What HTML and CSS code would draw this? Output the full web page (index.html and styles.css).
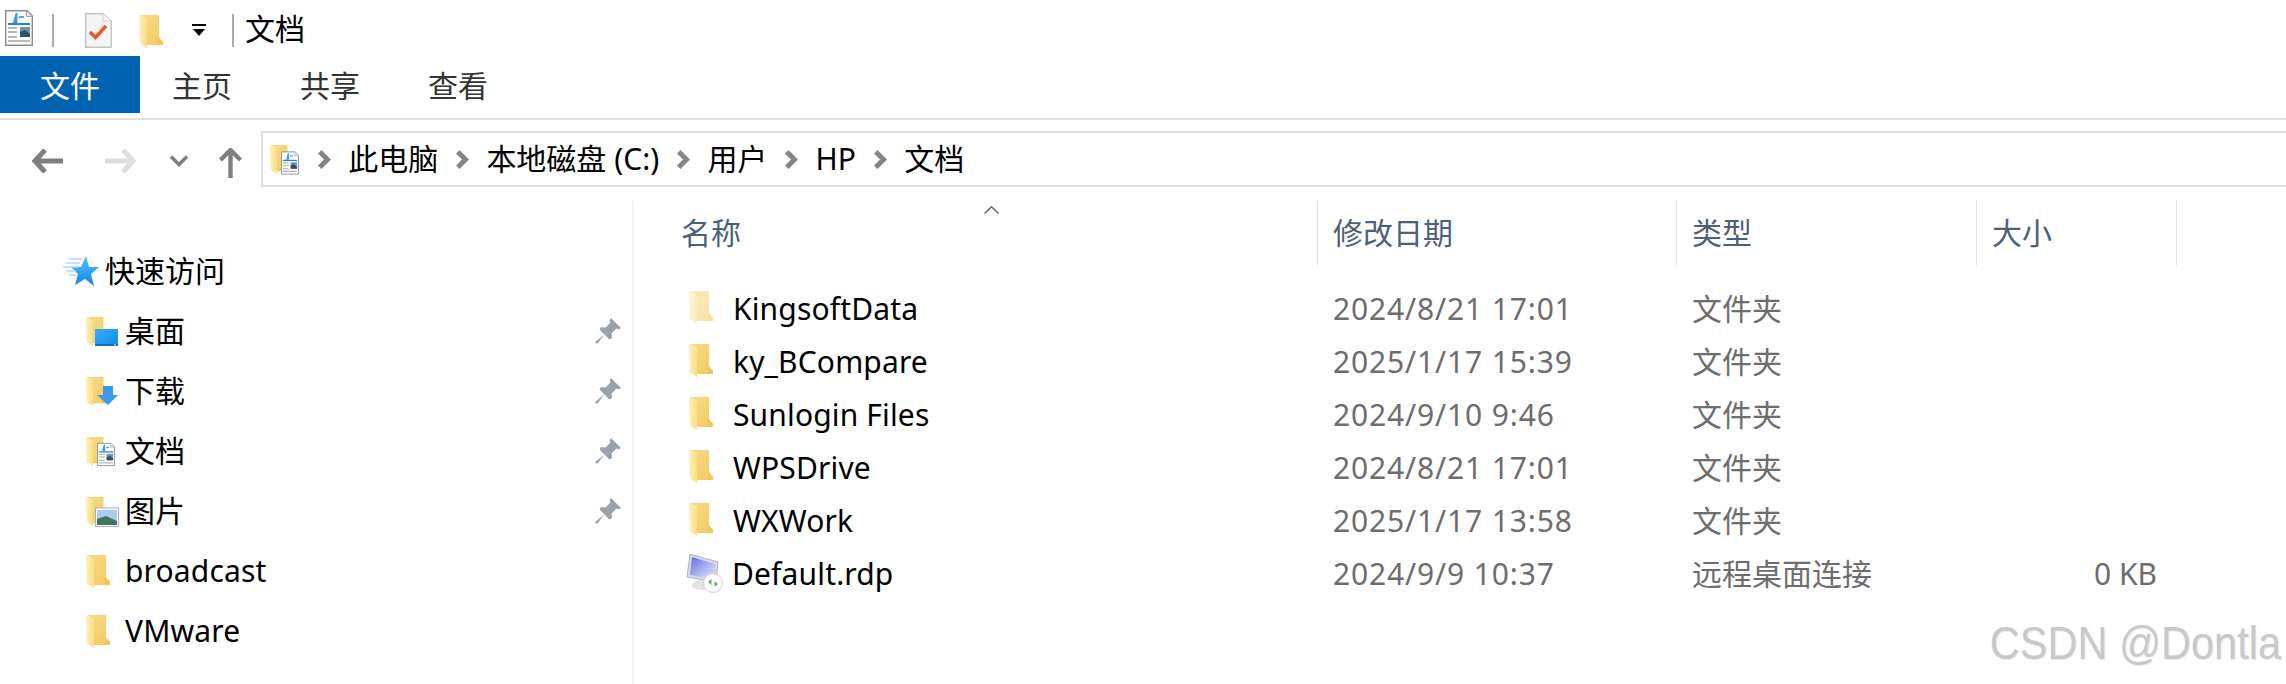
FILE: index.html
```html
<!DOCTYPE html>
<html lang="zh-CN">
<head>
<meta charset="utf-8">
<title>文档</title>
<link rel="stylesheet" href="styles.css">
</head>
<body>
<svg class="defs" xmlns="http://www.w3.org/2000/svg">
  <defs>
    <linearGradient id="gBody" x1="0" y1="0" x2="1" y2="1"><stop offset="0" stop-color="#f8dc8a"/><stop offset="1" stop-color="#f2c95c"/></linearGradient>
    <linearGradient id="gFlap" x1="0" y1="0" x2="1" y2="0"><stop offset="0" stop-color="#fff0b8"/><stop offset="1" stop-color="#fbdd85"/></linearGradient>
    <linearGradient id="gStar" x1="0" y1="0" x2="0" y2="1"><stop offset="0" stop-color="#4cc2ff"/><stop offset="1" stop-color="#1583e8"/></linearGradient>
    <linearGradient id="gScreen" x1="0" y1="0" x2="1" y2="1"><stop offset="0" stop-color="#37adfb"/><stop offset="1" stop-color="#0f8ae6"/></linearGradient>
    <linearGradient id="gMon" x1="0" y1="0" x2="1" y2="1"><stop offset="0" stop-color="#5c6fd6"/><stop offset=".55" stop-color="#a9b6f0"/><stop offset="1" stop-color="#dfe5fb"/></linearGradient>
    <symbol id="folder" viewBox="0 0 24 33">
      <path d="M1 0H20V26L24 26V30H8V33L1 28Z" fill="url(#gBody)"/>
      <path d="M20 22L24 27V30H18Z" fill="#f1c75a"/>
      <path d="M0 0L8 6V33L1 28Z" fill="url(#gFlap)"/>
      <path d="M0 0L1 0L8 5V6Z" fill="#fff6d6"/>
    </symbol>
    <symbol id="doc" viewBox="0 0 28 36">
      <path d="M.7.7H22L27.3 6V35.3H.7Z" fill="#fff" stroke="#8d8d8d" stroke-width="1.4"/>
      <path d="M21.5 1V6.5H27" fill="#e8e8e8" stroke="#a5a5a5"/>
      <path d="M4 13L8 13L10.500 3H12.500V13H9Z" fill="#3b9be8"/>
      <rect x="14" y="6" width="5" height="2" fill="#4ba6ee"/>
      <rect x="3" y="13" width="22" height="2" fill="#1c86dc"/>
      <rect x="3" y="17" width="9" height="2" fill="#b9b9b9"/>
      <rect x="3" y="21" width="9" height="2" fill="#b9b9b9"/>
      <rect x="3" y="26" width="9" height="2" fill="#b9b9b9"/>
      <rect x="3" y="30" width="22" height="2" fill="#b9b9b9"/>
      <rect x="15" y="17" width="10" height="10" fill="#6e93ad"/>
      <path d="M15 27V22L20 20L25 24V27Z" fill="#33505f"/>
    </symbol>
    <symbol id="chev" viewBox="0 0 13 19">
      <path d="M0 3.500L3.500 0L13 9.500L3.500 19L0 15.500L6 9.500Z" fill="#858585"/>
    </symbol>
    <symbol id="pin" viewBox="0 0 26 26">
      <path d="M16 0L26 10L23.500 11.500L21.500 10.500L16.500 15.500L17 20L14.500 21.500L9.500 16.500L2 26L0 24L9.500 16.500L4.500 11.500L6 9L10.500 9.500L15.500 4.500L14.500 2.500Z" fill="#99a2aa"/>
    </symbol>
  </defs>
</svg>

<header class="titlebar">
  <svg class="ic-doc" viewBox="0 0 28 36"><use href="#doc"/></svg>
  <span class="sep sep-a"></span>
  <svg class="ic-check" viewBox="0 0 27 35">
    <path d="M.7.7H18L26.300 8V34.300H.7Z" fill="#f5f5f5" stroke="#c4c4c4" stroke-width="1.400"/>
    <path d="M18 1V8H26" fill="#fff" stroke="#c9c9c9"/>
    <path d="M5 19L10.500 24.500L21 13" fill="none" stroke="#f0561d" stroke-width="3.500"/>
  </svg>
  <svg class="ic-qfolder" viewBox="0 0 24 33"><use href="#folder"/></svg>
  <svg class="ic-drop" viewBox="0 0 14 13"><rect x="0" y="0" width="14" height="2" fill="#000"/><path d="M1 5H13L7 12Z" fill="#000"/></svg>
  <span class="sep sep-b"></span>
  <span class="title-text">文档</span>
</header>

<nav class="ribbon">
  <span class="tab tab-file">文件</span>
  <span class="tab">主页</span>
  <span class="tab">共享</span>
  <span class="tab">查看</span>
</nav>

<div class="navbar">
  <div class="nav-btns">
    <svg class="ic-arrow" viewBox="0 0 31 24"><path d="M13 1L3 12L13 23M3 12H31" fill="none" stroke="#7f7f7f" stroke-width="5"/></svg>
    <svg class="ic-arrow ic-fwd" viewBox="0 0 31 24"><path d="M18 1L28 12L18 23M28 12H0" fill="none" stroke="#dedede" stroke-width="5"/></svg>
    <svg class="ic-down" viewBox="0 0 18 12"><path d="M1 1.500L9 9.500L17 1.500" fill="none" stroke="#7f7f7f" stroke-width="3.400"/></svg>
    <svg class="ic-up" viewBox="0 0 23 30"><path d="M1.500 12L11.500 2L21.500 12M11.500 2V30" fill="none" stroke="#7f7f7f" stroke-width="4.400"/></svg>
  </div>
  <div class="address">
    <svg class="ic-crumb" viewBox="0 0 29 33"><use href="#folder" width="21" height="33"/><use href="#doc" x="11" y="8" width="18" height="24"/></svg>
    <svg class="ic-chev"><use href="#chev"/></svg><span>此电脑</span>
    <svg class="ic-chev"><use href="#chev"/></svg><span>本地磁盘 (C:)</span>
    <svg class="ic-chev"><use href="#chev"/></svg><span>用户</span>
    <svg class="ic-chev"><use href="#chev"/></svg><span>HP</span>
    <svg class="ic-chev"><use href="#chev"/></svg><span>文档</span>
  </div>
</div>

<div class="content">
  <aside class="sidebar">
    <div class="side-row side-quick">
      <svg class="ic-star" viewBox="0 0 36 30">
        <path d="M23 0L26 11H36L28 18L31 30L22 23L12 29L15 18L8 11H18Z" fill="url(#gStar)"/>
        <path d="M6 3H19M3 7H17M0 11H15M3 15H13M6 19H13" stroke="#a8dcfb" stroke-width="1.500"/>
      </svg>
      <span>快速访问</span>
    </div>
    <div class="side-row">
      <svg class="ic-side" viewBox="0 0 33 33"><use href="#folder" width="21" height="33"/>
        <rect x="9" y="14" width="23" height="17" fill="url(#gScreen)"/><rect x="9" y="29" width="23" height="2" fill="#1470b8"/><rect x="28" y="29.500" width="2" height="1" fill="#fff"/></svg>
      <span>桌面</span><svg class="ic-pin"><use href="#pin"/></svg>
    </div>
    <div class="side-row">
      <svg class="ic-side" viewBox="0 0 33 33"><use href="#folder" width="21" height="33"/>
        <path d="M17 11H27V20H32L22 30L11 20H17Z" fill="#3d97ea"/></svg>
      <span>下载</span><svg class="ic-pin"><use href="#pin"/></svg>
    </div>
    <div class="side-row">
      <svg class="ic-side" viewBox="0 0 33 33"><use href="#folder" width="21" height="33"/><use href="#doc" x="11" y="7" width="18" height="25"/></svg>
      <span>文档</span><svg class="ic-pin"><use href="#pin"/></svg>
    </div>
    <div class="side-row">
      <svg class="ic-side" viewBox="0 0 33 33"><use href="#folder" width="21" height="33"/>
        <rect x="9.500" y="13" width="23" height="18.500" fill="#fff" stroke="#aab2bc"/>
        <rect x="11" y="15" width="20" height="15" fill="#a9cdf2"/>
        <path d="M11 30V24L20 21L31 26V30Z" fill="#41735d"/></svg>
      <span>图片</span><svg class="ic-pin"><use href="#pin"/></svg>
    </div>
    <div class="side-row">
      <svg class="ic-side" viewBox="0 0 33 33"><use href="#folder" width="24" height="33"/></svg>
      <span class="latin">broadcast</span>
    </div>
    <div class="side-row">
      <svg class="ic-side" viewBox="0 0 33 33"><use href="#folder" width="24" height="33"/></svg>
      <span class="latin">VMware</span>
    </div>
  </aside>

  <main class="files">
    <div class="grid head">
      <div class="hcell hcell-name">名称<svg class="sort" viewBox="0 0 15 8"><path d="M.5 7.500L7.500 .7L14.500 7.500" fill="none" stroke="#555" stroke-width="1.200"/></svg></div>
      <div class="hcell">修改日期</div>
      <div class="hcell">类型</div>
      <div class="hcell">大小</div>
    </div>
    <div class="grid row">
      <div class="name"><svg class="ic-file pale" viewBox="0 0 24 33"><use href="#folder"/></svg><span class="latin">KingsoftData</span></div>
      <div class="cell date">2024/8/21 17:01</div><div class="cell">文件夹</div><div class="cell size"></div>
    </div>
    <div class="grid row">
      <div class="name"><svg class="ic-file" viewBox="0 0 24 33"><use href="#folder"/></svg><span class="latin">ky_BCompare</span></div>
      <div class="cell date">2025/1/17 15:39</div><div class="cell">文件夹</div><div class="cell size"></div>
    </div>
    <div class="grid row">
      <div class="name"><svg class="ic-file" viewBox="0 0 24 33"><use href="#folder"/></svg><span class="latin">Sunlogin Files</span></div>
      <div class="cell date">2024/9/10 9:46</div><div class="cell">文件夹</div><div class="cell size"></div>
    </div>
    <div class="grid row">
      <div class="name"><svg class="ic-file" viewBox="0 0 24 33"><use href="#folder"/></svg><span class="latin">WPSDrive</span></div>
      <div class="cell date">2024/8/21 17:01</div><div class="cell">文件夹</div><div class="cell size"></div>
    </div>
    <div class="grid row">
      <div class="name"><svg class="ic-file" viewBox="0 0 24 33"><use href="#folder"/></svg><span class="latin">WXWork</span></div>
      <div class="cell date">2025/1/17 13:58</div><div class="cell">文件夹</div><div class="cell size"></div>
    </div>
    <div class="grid row">
      <div class="name"><svg class="ic-rdp" viewBox="0 0 40 40">
        <path d="M5 0L33 8L31 28L2 23Z" fill="#d6d9e6" stroke="#aeb2c4"/>
        <path d="M7 3L30 10L28.500 25L5 21Z" fill="url(#gMon)"/>
        <ellipse cx="17" cy="31" rx="10" ry="5" fill="#e4e4e4"/>
        <circle cx="28" cy="29" r="9.500" fill="#fff" stroke="#cfcfcf"/>
        <path d="M23 28L26.500 25V31ZM33 30L29.500 27V33Z" fill="#5cb567"/>
      </svg><span class="latin">Default.rdp</span></div>
      <div class="cell date">2024/9/9 10:37</div><div class="cell">远程桌面连接</div><div class="cell size">0 KB</div>
    </div>
  </main>
</div>

<div class="watermark">CSDN @Dontla</div>
</body>
</html>
```
FILE: styles.css
```css
* { box-sizing: border-box; }
html, body { margin: 0; padding: 0; }
body {
  position: relative;
  width: 2286px;
  height: 684px;
  overflow: hidden;
  background: #fff;
  color: #000;
  font-family: "Noto Sans", "Noto Sans CJK SC", sans-serif;
  font-size: 30px;
  line-height: 40px;
}
svg { display: block; flex: none; }
.defs { position: absolute; width: 0; height: 0; }

.titlebar { display: flex; align-items: flex-start; height: 56px; }
.ic-doc { width: 28px; height: 36px; margin: 10px 0 0 5px; }
.sep { width: 2px; height: 33px; margin-top: 14px; background: #a9a9a9; }
.sep-a { margin-left: 19px; }
.ic-check { width: 27px; height: 35px; margin: 13px 0 0 31px; }
.ic-qfolder { width: 24px; height: 33px; margin: 15px 0 0 27px; }
.ic-drop { width: 14px; height: 13px; margin: 24px 0 0 29px; }
.sep-b { margin-left: 26px; }
.title-text { margin: 9px 0 0 11px; }

.ribbon { display: flex; height: 64px; padding-bottom: 5px; border-bottom: 2px solid #e0e0e0; }
.tab { width: 128px; padding: 2px 4px 0 0; line-height: 55px; text-align: center; color: #333; }
.tab-file { width: 140px; padding-right: 0; background: #0063b1; color: #fff; }

.navbar { display: flex; height: 56px; margin-top: 11px; }
.nav-btns { display: flex; align-items: flex-start; width: 261px; padding: 18px 0 0 32px; }
.ic-arrow { width: 31px; height: 24px; }
.ic-fwd { margin-left: 42px; }
.ic-down { width: 18px; height: 12px; margin: 6px 0 0 34px; }
.ic-up { width: 23px; height: 30px; margin: -1px 0 0 31px; }
.address { flex: 1; display: flex; align-items: center; gap: 17.600px; padding-left: 7px; border: 2px solid #dedede; border-right: 0; }
.ic-crumb { width: 29px; height: 33px; margin-right: 1px; }
.ic-chev { width: 13px; height: 19px; }

.content { display: flex; height: 483px; margin-top: 14px; }
.sidebar { width: 634px; padding-top: 40px; border-right: 2px solid #f3f3f3; }
.side-row { display: flex; align-items: center; height: 60px; padding-left: 86px; padding-right: 11px; }
.side-quick { padding-left: 63px; gap: 6px; }
.ic-star { width: 36px; height: 30px; }
.ic-side { width: 33px; height: 33px; margin-right: 6px; }
.ic-pin { width: 26px; height: 26px; margin-left: auto; }
.latin { letter-spacing: .15px; }

.files { flex: 1; }
.grid { display: grid; grid-template-columns: 684px 359px 300px 200px 1fr; }
.head { position: relative; height: 65px; margin-bottom: 16px; color: #4c607a; }
.hcell { display: flex; align-items: center; padding: 0 0 1px 15px; border-right: 1px solid #e6e6e6; }
.hcell-name { padding-left: 47px; }
.sort { position: absolute; left: 350px; top: 5px; width: 15px; height: 8px; }

.row { height: 53px; align-items: center; color: #6d6d6d; }
.name { display: flex; align-items: center; padding-left: 55px; color: #000; }
.ic-file { width: 24px; height: 33px; margin: 0 20px 2px 0; }
.pale { opacity: .55; }
.ic-rdp { width: 40px; height: 40px; margin: 0 7px 0 -4px; }
.cell { padding-left: 15px; }
.date { letter-spacing: .85px; }
.size { padding: 0 20px 0 0; text-align: right; }

.watermark {
  position: absolute;
  right: 5px;
  bottom: 18px;
  font-family: "Liberation Sans", sans-serif;
  font-size: 41.500px;
  line-height: 44px;
  color: #c9c9c9;
  text-shadow: 1px 1px 1px #e8e8e8;
  transform: scaleY(1.1);
}
```
